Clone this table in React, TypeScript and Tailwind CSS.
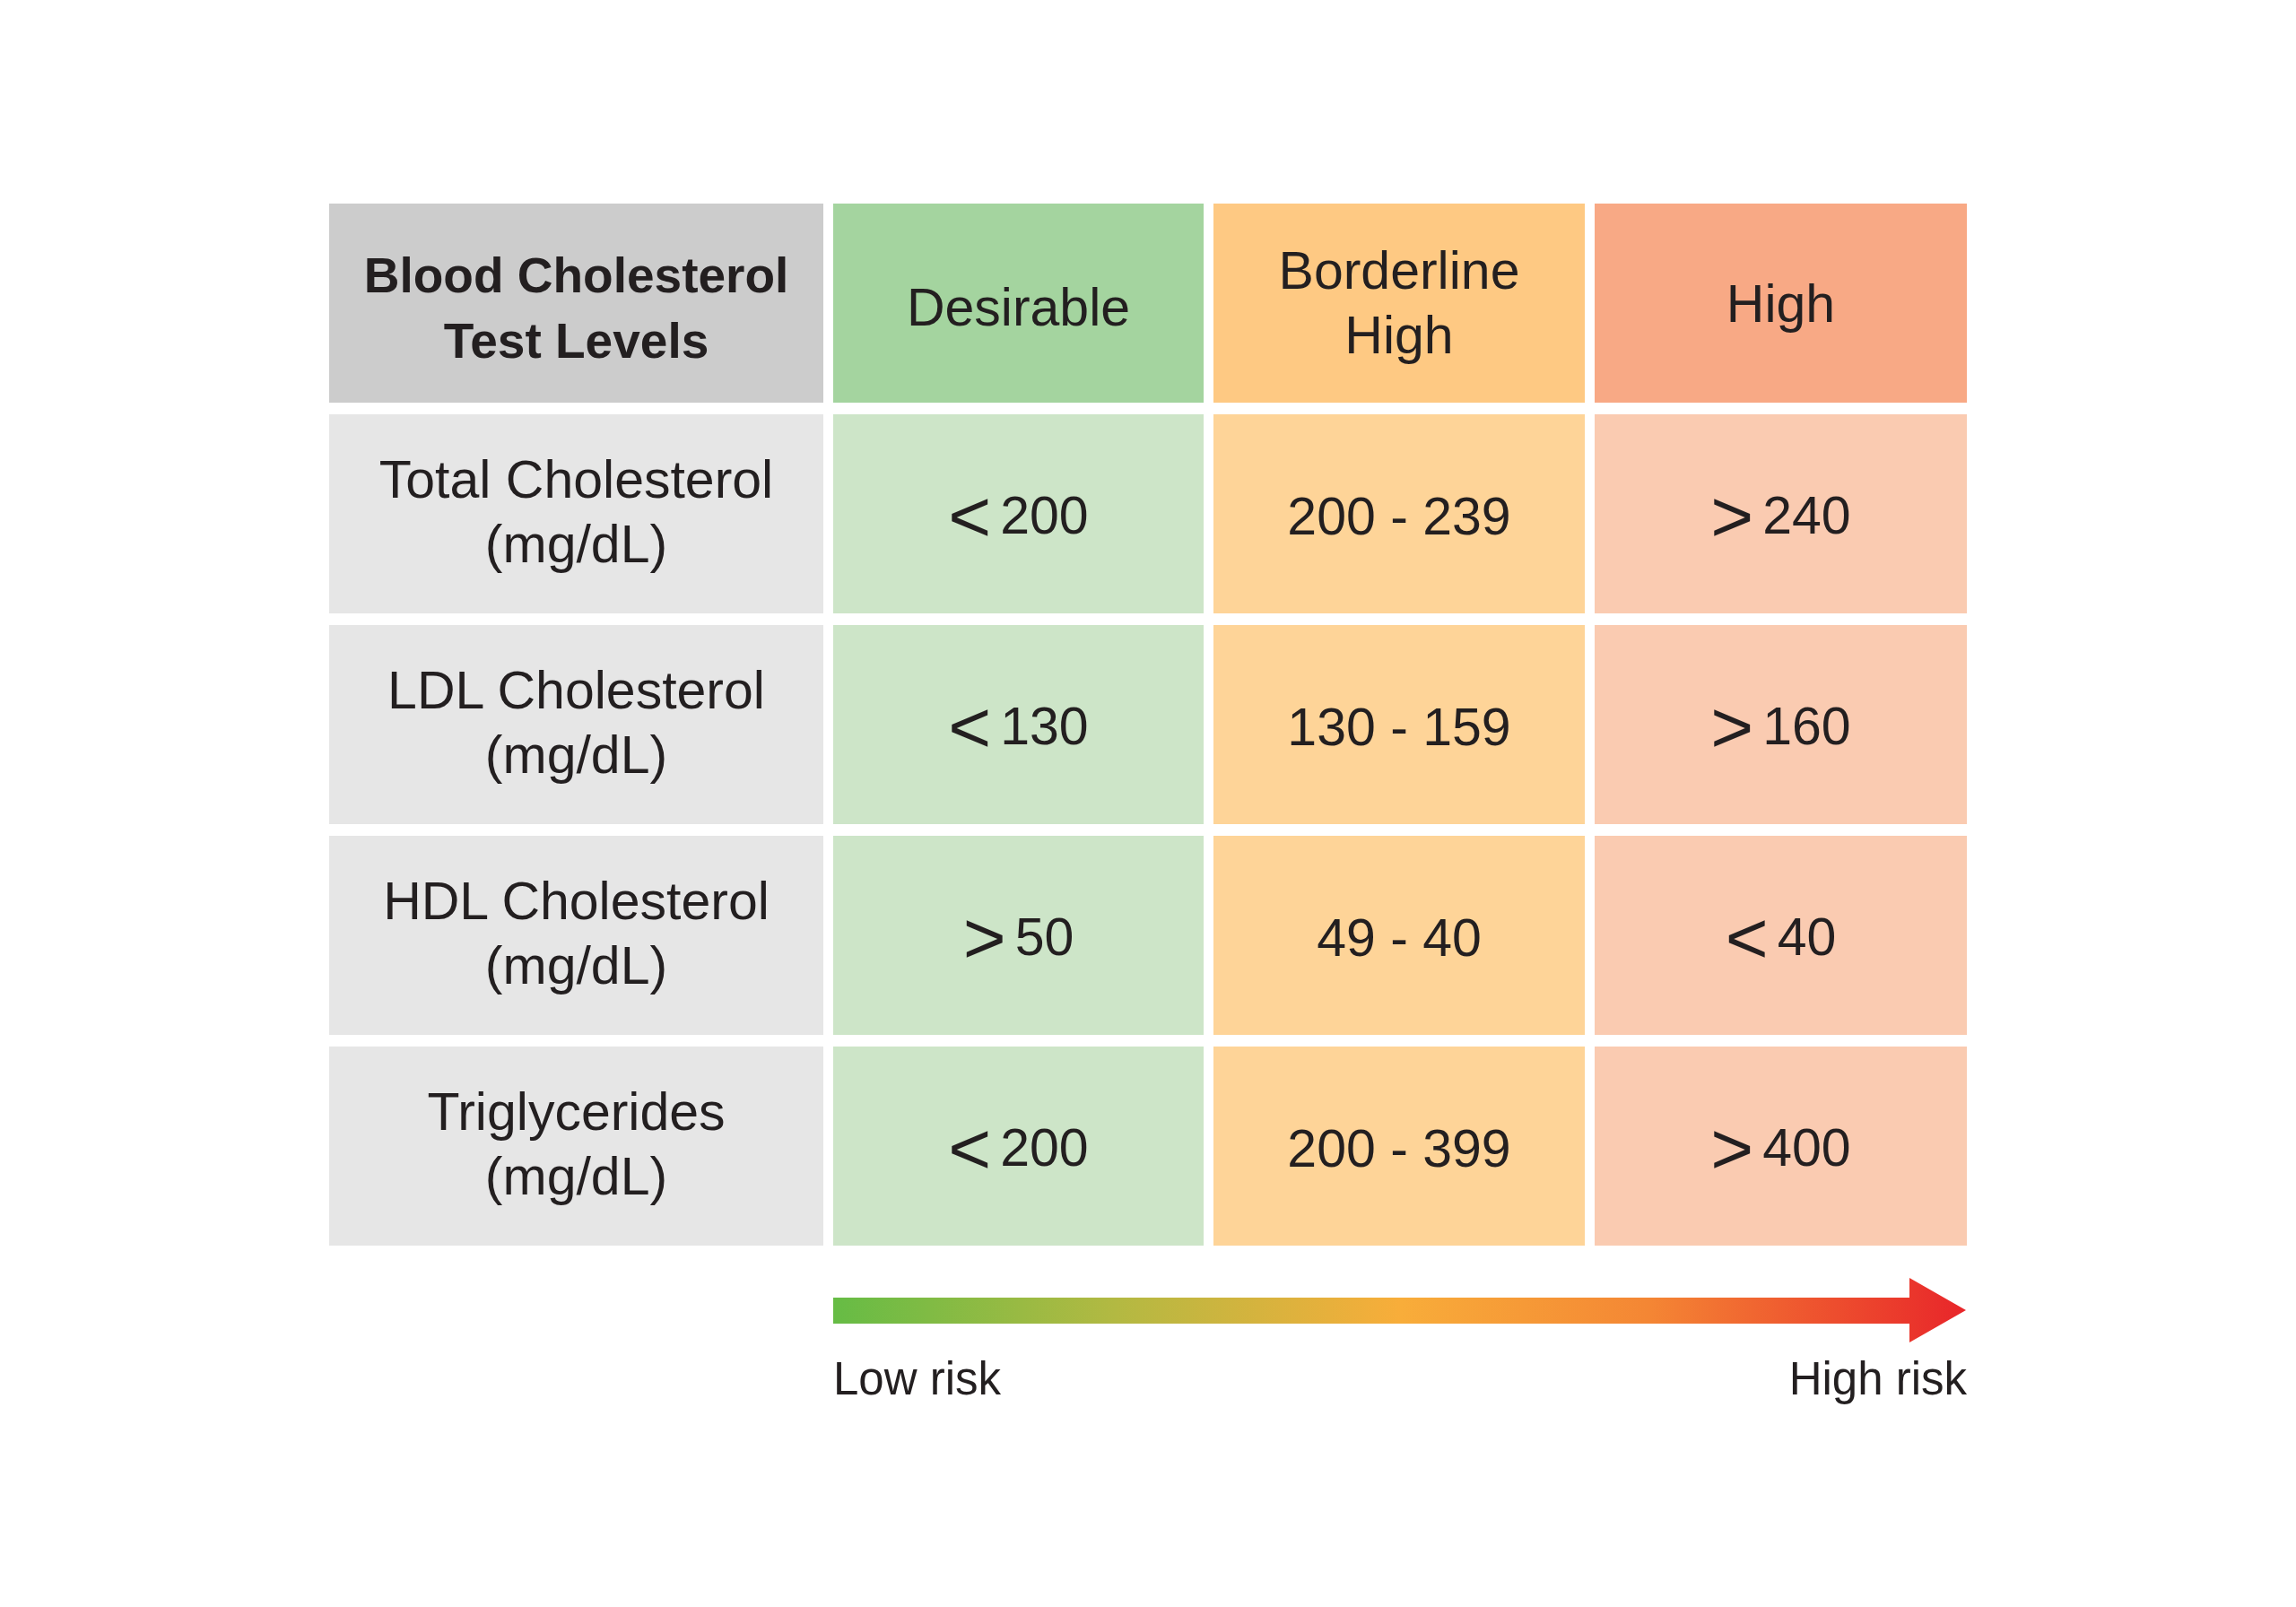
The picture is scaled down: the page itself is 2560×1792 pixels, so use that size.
import React from "react";

const font = { fontFamily: '"Liberation Sans", Arial, sans-serif' };

type Row = { label: [string, string]; values: [string, string, string] };

const rows: Row[] = [
  { label: ["Total Cholesterol", "(mg/dL)"], values: ["< 200", "200 - 239", "> 240"] },
  { label: ["LDL Cholesterol", "(mg/dL)"], values: ["< 130", "130 - 159", "> 160"] },
  { label: ["HDL Cholesterol", "(mg/dL)"], values: ["> 50", "49 - 40", "< 40"] },
  { label: ["Triglycerides", "(mg/dL)"], values: ["< 200", "200 - 399", "> 400"] },
];

const valueBg = ["bg-[#cde5c8]", "bg-[#fed498]", "bg-[#facbb1]"];

function Value({ v }: { v: string }) {
  const first = v.charAt(0);
  if (first === "<" || first === ">") {
    return (
      <span className="whitespace-nowrap">
        <span className="text-[82px] leading-none align-[-9px]">{first}</span>
        <span className="ml-[10px]">{v.slice(2)}</span>
      </span>
    );
  }
  return <span className="whitespace-nowrap">{v}</span>;
}

export default function App() {
  return (
    <div
      className="w-[2560px] h-[1792px] bg-white text-[#231f20] pt-[227px]"
      style={font}
    >
      <div className="mx-auto w-[1826px]">
        <div className="grid grid-cols-[551px_413px_414px_415px] gap-x-[11px] gap-y-[13px] auto-rows-[222px]">
          <div className="bg-[#cccccc] flex items-center justify-center text-center font-bold text-[55px] leading-[73px] pt-[12px]">
            <div>
              Blood Cholesterol
              <br />
              Test Levels
            </div>
          </div>
          <div className="bg-[#a4d49f] flex items-center justify-center text-[59px] pt-[10px]">
            Desirable
          </div>
          <div className="bg-[#fec983] flex items-center justify-center text-center text-[59px] leading-[72px]">
            <div>
              Borderline
              <br />
              High
            </div>
          </div>
          <div className="bg-[#f8a985] flex items-center justify-center text-[59px] pt-[2px]">
            High
          </div>

          {rows.map((r, i) => (
            <React.Fragment key={i}>
              <div className="bg-[#e6e6e6] flex items-center justify-center text-center text-[59px] leading-[72px] pb-[4px]">
                <div>
                  {r.label[0]}
                  <br />
                  {r.label[1]}
                </div>
              </div>
              {r.values.map((v, j) => (
                <div
                  key={j}
                  className={`${valueBg[j]} flex items-center justify-center text-[59px] leading-[72px] pt-[6px]`}
                >
                  <Value v={v} />
                </div>
              ))}
            </React.Fragment>
          ))}
        </div>

        <div className="flex mt-[36px]">
          <div className="w-[562px] shrink-0" />
          <div className="w-[1264px] flex flex-col">
            <svg width="1264" height="72" viewBox="0 0 1264 72">
              <defs>
                <linearGradient id="risk" gradientUnits="userSpaceOnUse" x1="0" y1="0" x2="1264" y2="0">
                  <stop offset="0" stopColor="#66bc45" />
                  <stop offset="0.25" stopColor="#b3b942" />
                  <stop offset="0.5" stopColor="#f8ad3a" />
                  <stop offset="0.72" stopColor="#f48634" />
                  <stop offset="1" stopColor="#e8252a" />
                </linearGradient>
              </defs>
              <rect x="0" y="22" width="1202" height="29" fill="url(#risk)" />
              <polygon points="1200,0 1263,36 1200,72" fill="url(#risk)" />
            </svg>
            <div className="flex justify-between text-[51px] leading-[61px] mt-[10px]">
              <span>Low risk</span>
              <span>High risk</span>
            </div>
          </div>
        </div>
      </div>
    </div>
  );
}
